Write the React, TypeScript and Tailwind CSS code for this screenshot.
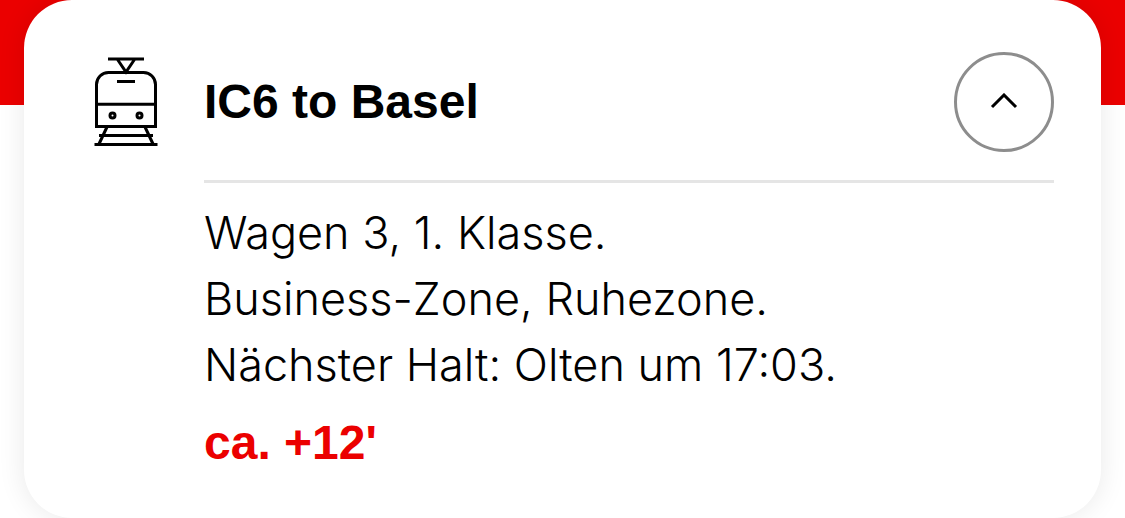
import { useState } from "react";

function TrainIcon() {
  return (
    <svg
      width="64"
      height="92"
      viewBox="0 0 64 92"
      fill="none"
      stroke="currentColor"
      strokeWidth="3"
      aria-hidden="true"
    >
      <path d="M14 3h36M23.500 3.500l8.500 12.500L40.500 3.500" />
      <path d="M2.500 70.500V28.500a12 12 0 0 1 12-12h35a12 12 0 0 1 12 12v42z" />
      <path d="M23 25.500h18M2.500 48.200h59" />
      <circle cx="18.500" cy="59.500" r="2.500" />
      <circle cx="45.500" cy="59.500" r="2.500" />
      <path d="M13 71L4.500 89M51 71l8.500 18M5 79.500h54M0.500 88.500h63" />
    </svg>
  );
}

function ChevronUp() {
  return (
    <svg width="28" height="18" viewBox="0 0 28 18" fill="none" stroke="currentColor" strokeWidth="3" aria-hidden="true">
      <path d="M2 14L14 2l12 12" />
    </svg>
  );
}

const details = [
  "Wagen 3, 1. Klasse.",
  "Business-Zone, Ruhezone.",
  "Nächster Halt: Olten um 17:03.",
];

export default function App() {
  const [open, setOpen] = useState(true);

  return (
    <main className="bg-[linear-gradient(#eb0000_105px,#ffffff_105px)] px-6 font-['Liberation_Sans',Arial,sans-serif] text-black">
      <article className="grid grid-cols-[64px_minmax(0,1fr)] gap-x-[46px] rounded-[48px] bg-white pr-[47px] pl-[70px] shadow-[0_0_28px_rgba(0,0,0,0.09)]">
        <div className="pt-14">
          <TrainIcon />
        </div>
        <div>
          <header className="flex items-center justify-between border-b-3 border-[#e5e5e5] pt-[52px] pb-7">
            <h1 className="text-[48px] leading-[66px] font-bold">IC6 to Basel</h1>
            <button
              type="button"
              aria-label="Toggle details"
              aria-expanded={open}
              onClick={() => setOpen(!open)}
              className="flex size-[100px] shrink-0 items-center justify-center rounded-full border-3 border-[#8d8d8d]"
            >
              <ChevronUp />
            </button>
          </header>
          {open && (
            <div className="pt-[17px] pb-[42px]">
              <div className="font-['Inter','Liberation_Sans',sans-serif] text-[45px] leading-[66px] font-light">
                {details.map((line) => (
                  <p key={line}>{line}</p>
                ))}
              </div>
              <p className="pt-3 text-[48px] leading-[66px] font-bold text-[#eb0000]">ca. +12'</p>
            </div>
          )}
        </div>
      </article>
    </main>
  );
}
